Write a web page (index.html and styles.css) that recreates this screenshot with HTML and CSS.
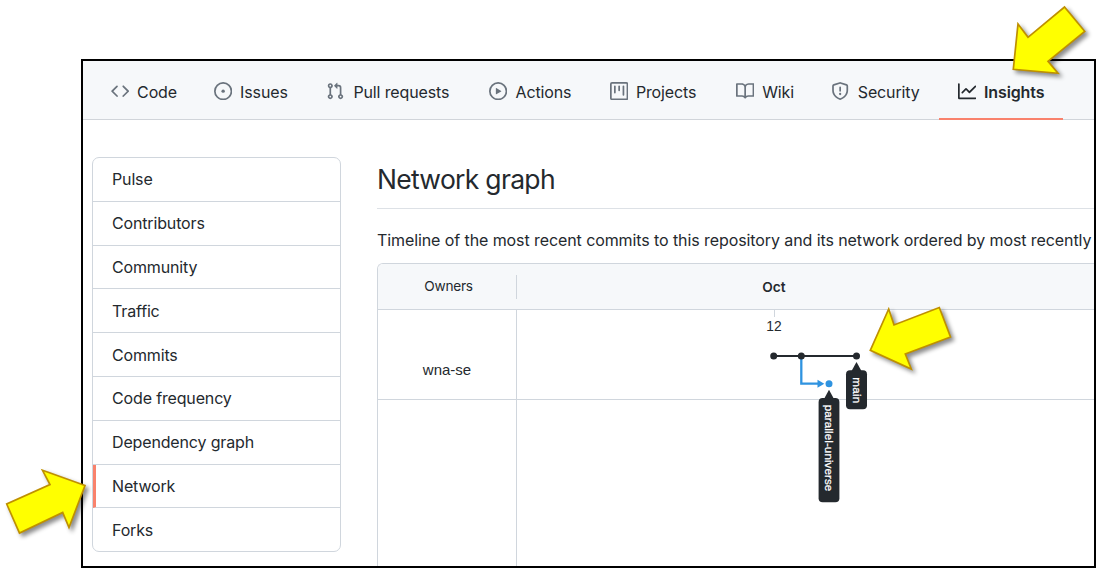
FILE: index.html
```html
<!DOCTYPE html>
<html lang="en">
<head>
<meta charset="utf-8">
<title>Network graph</title>
<link rel="stylesheet" href="styles.css">
</head>
<body>
<div class="window">
  <nav class="tabs">
    <a class="tab tab-code"><svg class="icon" viewBox="0 0 16 16"><path fill-rule="evenodd" d="M4.72 3.22a.75.75 0 011.06 1.06L2.06 8l3.72 3.72a.75.75 0 11-1.06 1.06L.47 8.53a.75.75 0 010-1.06l4.25-4.25zm6.56 0a.75.75 0 10-1.06 1.06L13.94 8l-3.72 3.72a.75.75 0 101.06 1.06l4.25-4.25a.75.75 0 000-1.06l-4.25-4.25z"/></svg><span>Code</span></a>
    <a class="tab tab-issues"><svg class="icon" viewBox="0 0 16 16"><path d="M8 9.5a1.5 1.5 0 100-3 1.5 1.5 0 000 3z"/><path fill-rule="evenodd" d="M8 0a8 8 0 100 16A8 8 0 008 0zM1.5 8a6.5 6.5 0 1113 0 6.5 6.5 0 01-13 0z"/></svg><span>Issues</span></a>
    <a class="tab tab-pulls"><svg class="icon" viewBox="0 0 16 16"><path fill-rule="evenodd" d="M7.177 3.073L9.573.677A.25.25 0 0110 .854v4.792a.25.25 0 01-.427.177L7.177 3.427a.25.25 0 010-.354zM3.75 2.5a.75.75 0 100 1.5.75.75 0 000-1.5zm-2.25.75a2.25 2.25 0 113 2.122v5.256a2.251 2.251 0 11-1.5 0V5.372A2.25 2.25 0 011.5 3.25zM11 2.5h-1V4h1a1 1 0 011 1v5.628a2.251 2.251 0 101.5 0V5A2.5 2.5 0 0011 2.5zm1 10.25a.75.75 0 111.5 0 .75.75 0 01-1.5 0zM3.75 12a.75.75 0 100 1.5.75.75 0 000-1.5z"/></svg><span>Pull requests</span></a>
    <a class="tab tab-actions"><svg class="icon" viewBox="0 0 16 16"><path fill-rule="evenodd" d="M1.5 8a6.5 6.5 0 1113 0 6.5 6.5 0 01-13 0zM8 0a8 8 0 100 16A8 8 0 008 0zM6.379 5.227A.25.25 0 006 5.442v5.117a.25.25 0 00.379.214l4.264-2.559a.25.25 0 000-.428L6.379 5.227z"/></svg><span>Actions</span></a>
    <a class="tab tab-projects"><svg class="icon" viewBox="0 0 16 16"><path fill-rule="evenodd" d="M1.75 0A1.75 1.75 0 000 1.75v12.5C0 15.216.784 16 1.75 16h12.5A1.75 1.75 0 0016 14.25V1.75A1.75 1.75 0 0014.25 0H1.75zM1.5 1.75a.25.25 0 01.25-.25h12.5a.25.25 0 01.25.25v12.5a.25.25 0 01-.25.25H1.75a.25.25 0 01-.25-.25V1.75zM11.75 3a.75.75 0 00-.75.75v7.5a.75.75 0 001.5 0v-7.5a.75.75 0 00-.75-.75zm-8.25.75a.75.75 0 011.5 0v5.5a.75.75 0 01-1.5 0v-5.5zM8 3a.75.75 0 00-.75.75v3.5a.75.75 0 001.5 0v-3.5A.75.75 0 008 3z"/></svg><span>Projects</span></a>
    <a class="tab tab-wiki"><svg class="icon" viewBox="0 0 16 16"><path fill-rule="evenodd" d="M0 1.75A.75.75 0 01.75 1h4.253c1.227 0 2.317.59 3 1.501A3.744 3.744 0 0111.006 1h4.245a.75.75 0 01.75.75v10.5a.75.75 0 01-.75.75h-4.507a2.25 2.25 0 00-1.591.659l-.622.621a.75.75 0 01-1.06 0l-.622-.621A2.25 2.25 0 005.258 13H.75a.75.75 0 01-.75-.75V1.75zm8.755 3a2.25 2.25 0 012.25-2.25H14.5v9h-3.757c-.71 0-1.4.201-1.992.572l.004-7.322zm-1.504 7.324l.004-5.073-.002-2.253A2.25 2.25 0 005.003 2.5H1.5v9h3.757a3.75 3.75 0 011.994.574z"/></svg><span>Wiki</span></a>
    <a class="tab tab-security"><svg class="icon" viewBox="0 0 16 16"><path fill-rule="evenodd" d="M7.467.133a1.75 1.75 0 011.066 0l5.25 1.68A1.75 1.75 0 0115 3.48V7c0 1.566-.32 3.182-1.303 4.682-.983 1.498-2.585 2.813-5.032 3.855a1.7 1.7 0 01-1.33 0c-2.447-1.042-4.049-2.357-5.032-3.855C1.32 10.182 1 8.566 1 7V3.48a1.75 1.75 0 011.217-1.667l5.25-1.68zm.61 1.429a.25.25 0 00-.153 0l-5.25 1.68a.25.25 0 00-.174.238V7c0 1.358.275 2.666 1.057 3.86.784 1.194 2.121 2.34 4.366 3.297a.2.2 0 00.154 0c2.245-.956 3.582-2.104 4.366-3.298C13.225 9.666 13.5 8.36 13.5 7V3.48a.25.25 0 00-.174-.237l-5.25-1.68zM9 10.5a1 1 0 11-2 0 1 1 0 012 0zm-.25-5.75a.75.75 0 10-1.5 0v3a.75.75 0 001.5 0v-3z"/></svg><span>Security</span></a>
    <a class="tab tab-insights selected"><svg class="icon" viewBox="0 0 16 16"><path fill-rule="evenodd" d="M1.5 1.75a.75.75 0 00-1.5 0v12.5c0 .414.336.75.75.75h14.5a.75.75 0 000-1.5H1.5V1.75zm14.28 2.53a.75.75 0 00-1.06-1.06L10 7.94 7.53 5.47a.75.75 0 00-1.06 0L3.22 8.72a.75.75 0 001.06 1.06L7 7.06l2.47 2.47a.75.75 0 001.06 0l5.25-5.25z"/></svg><span>Insights</span></a>
  </nav>
  <div class="content">
    <aside class="menu">
      <a class="menu-item">Pulse</a>
      <a class="menu-item">Contributors</a>
      <a class="menu-item">Community</a>
      <a class="menu-item">Traffic</a>
      <a class="menu-item">Commits</a>
      <a class="menu-item">Code frequency</a>
      <a class="menu-item">Dependency graph</a>
      <a class="menu-item current">Network</a>
      <a class="menu-item">Forks</a>
    </aside>
    <main class="main">
      <h1 class="title">Network graph</h1>
      <p class="intro">Timeline of the most recent commits to this repository and its network ordered by most recently</p>
      <div class="network">
        <div class="network-head">
          <div class="head-owners">Owners</div>
          <div class="head-month">Oct</div>
        </div>
        <div class="network-body">
          <div class="owners"><div class="owner">wna-se</div></div>
          <svg class="graph" viewBox="517 310 577 256">
            <path class="rule" d="M517 399.5H1094M774.5 310V317"/>
            <text class="day" x="773.9" y="330.7" text-anchor="middle">12</text>
            <path class="branch-main" d="M773.7 356H856.5"/>
            <path class="branch-side" d="M801.3 357V383.7H819"/>
            <path class="blue" d="M817.5 379.7L824.3 383.7L817.5 387.7Z"/>
            <circle class="dark" cx="773.7" cy="356" r="3.5"/>
            <circle class="dark" cx="801.3" cy="356" r="3.5"/>
            <circle class="dark" cx="856.5" cy="356" r="3.5"/>
            <circle class="blue" cx="829" cy="383.7" r="3.5"/>
            <path class="dark" d="M856.5 362L861.5 371H851.5Z"/>
            <rect class="dark" x="846" y="370.3" width="21" height="39" rx="4"/>
            <text class="label" transform="translate(852.7 377.2) rotate(90)" textLength="26">main</text>
            <path class="dark" d="M829 389.8L834 399H824Z"/>
            <rect class="dark" x="818.6" y="398" width="20.8" height="104.3" rx="4"/>
            <text class="label" transform="translate(825.2 404.8) rotate(90)" textLength="86.5">parallel-universe</text>
          </svg>
        </div>
      </div>
    </main>
  </div>
</div>
<svg class="arrows" viewBox="0 0 1100 568">
  <path d="M1013.3 69.3L1018 24L1028 37.3L1064.5 7L1084.7 31.3L1048 61.3L1058 73.3Z"/>
  <path d="M870.3 350.3L888.7 309L894 325L939.3 307.5L950.5 337L905.3 354L911.3 369Z"/>
  <path d="M85 485.5L42.5 470.3L50 484.5L6.7 504L19.5 533L62.7 512.5L69 527.5Z"/>
</svg>
</body>
</html>
```
FILE: styles.css
```css
* { box-sizing: border-box; }

body {
  margin: 0;
  width: 1100px;
  height: 568px;
  padding: 59px 0 0 81px;
  overflow: hidden;
  background: #fff;
  color: #24292e;
  font-family: Inter, "Liberation Sans", sans-serif;
  font-size: 16px;
}

.window {
  width: 1015px;
  height: 509px;
  border: 2px solid #000;
  overflow: hidden;
}

.tabs {
  display: flex;
  height: 59px;
  padding-left: 9.5px;
  background: #f6f8fa;
  border-bottom: 1px solid #d1d5da;
}

.tab {
  display: flex;
  flex: none;
  align-items: center;
  gap: 8px;
  height: 59px;
  padding: 2px 0 0 18.3px;
  letter-spacing: -0.13px;
  white-space: nowrap;
}

.tab-code { width: 103px; }
.tab-issues { width: 112px; }
.tab-pulls { width: 163.4px; gap: 9.3px; }
.tab-actions { width: 120.4px; }
.tab-projects { width: 126.3px; }
.tab-wiki { width: 95.6px; }
.tab-security { width: 126.3px; }
.tab-insights { width: 124px; }

.icon {
  flex: none;
  width: 18.3px;
  height: 18.3px;
  margin-top: -1px;
  fill: #6a737d;
}

.selected {
  padding-top: 4px;
  border-bottom: 2px solid #f9826c;
  font-weight: 600;
}

.selected .icon { fill: #24292e; }

.content {
  display: flex;
  align-items: flex-start;
  gap: 36px;
  padding: 37px 0 0 9px;
}

.menu {
  flex: none;
  width: 249px;
  border: 1px solid #d0d6dd;
  border-radius: 7px;
  overflow: hidden;
}

.menu-item {
  display: flex;
  align-items: center;
  height: 43.8px;
  padding: 0 0 0 19px;
  border-bottom: 1px solid #d0d6dd;
  letter-spacing: -0.15px;
}

.menu-item:last-child { height: 43px; border-bottom: 0; }

.current {
  padding-left: 16px;
  border-left: 3px solid #f9826c;
}

.main { flex: none; width: 717px; }

.title {
  height: 52px;
  margin: 0;
  padding-top: 4px;
  border-bottom: 1px solid #dde1e6;
  font-size: 26.5px;
  font-weight: 400;
  letter-spacing: -0.7px;
  line-height: 36px;
}

.intro {
  height: 54px;
  margin: 0;
  padding-top: 19px;
  letter-spacing: -0.09px;
  line-height: 24px;
  white-space: nowrap;
}

.network {
  height: 310px;
  border: 1px solid #d0d6dd;
  border-right: 0;
  border-radius: 6px 0 0 0;
  overflow: hidden;
}

.network-head {
  display: flex;
  align-items: center;
  height: 46px;
  background: #f6f8fa;
  border-bottom: 1px solid #d0d6dd;
  font-size: 13.7px;
}

.head-owners {
  width: 139px;
  height: 24px;
  padding-left: 3px;
  border-right: 1px solid #d0d6dd;
  letter-spacing: -0.3px;
  line-height: 22px;
  text-align: center;
}

.head-month {
  width: 514px;
  font-weight: 600;
  text-align: center;
}

.network-body { display: flex; }

.owners {
  flex: none;
  width: 139px;
  height: 256px;
  border-right: 1px solid #d0d6dd;
}

.owner {
  height: 90px;
  padding-top: 50px;
  border-bottom: 1px solid #d0d6dd;
  font: 15px/20px "Liberation Sans", sans-serif;
  text-align: center;
}

.graph {
  flex: none;
  width: 577px;
  height: 256px;
}

.rule { fill: none; stroke: #d0d6dd; }
.branch-main { fill: none; stroke: #24292e; stroke-width: 2; }
.branch-side { fill: none; stroke: #2f93e0; stroke-width: 2.3; }
.dark { fill: #24292e; }
.blue { fill: #2f93e0; }

.day {
  fill: #24292e;
  font: 13.8px "Liberation Sans", sans-serif;
}

.label {
  fill: #fff;
  stroke: #fff;
  stroke-width: 0.25;
  font: 11.6px "Liberation Sans", sans-serif;
}

/* Callout arrows lie over the whole page. */
.arrows {
  position: absolute;
  top: 0;
  left: 0;
  width: 1100px;
  height: 568px;
  fill: #ff0;
  stroke: #bf9000;
  stroke-width: 1.7;
  filter: drop-shadow(3px 3px 2px rgba(0, 0, 0, 0.45));
}
```
